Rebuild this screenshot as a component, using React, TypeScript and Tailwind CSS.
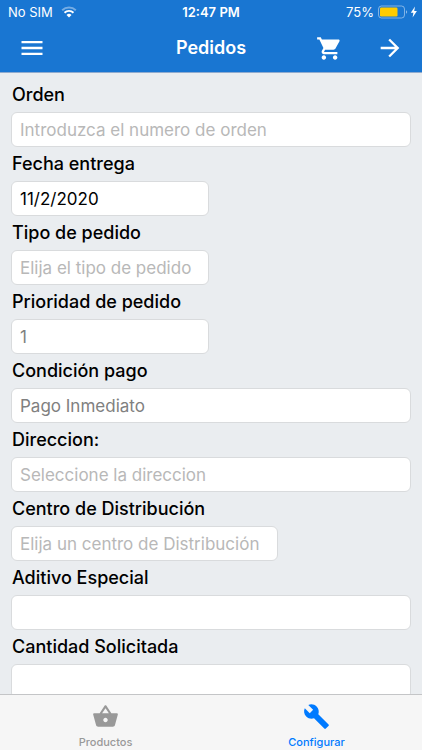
import { useState, type ReactNode } from "react";
import { MdArrowForward, MdMenu } from "react-icons/md";
import clsx from "clsx";

const fieldClass =
  "block h-[35px] rounded-md border border-[#d9dbdd] bg-white px-2 text-[17px] leading-6 outline-none appearance-none placeholder:text-[#b8b8b8]";

const icons = {
  cart: "M7 18c-1.1 0-1.99.9-1.99 2S5.9 22 7 22s2-.9 2-2-.9-2-2-2zM1 2v2h2l3.6 7.59-1.35 2.45c-.16.28-.25.61-.25.96 0 1.1.9 2 2 2h12v-2H7.42c-.14 0-.25-.11-.25-.25l.03-.12.9-1.63h7.45c.75 0 1.41-.41 1.75-1.03l3.58-6.49c.08-.14.12-.31.12-.48 0-.55-.45-1-1-1H5.21l-.94-2H1zm16 16c-1.1 0-1.99.9-1.99 2s.89 2 1.99 2 2-.9 2-2-.9-2-2-2z",
  basket:
    "M17.21 9l-4.38-6.56c-.19-.28-.51-.42-.83-.42-.32 0-.64.14-.83.43L6.79 9H2c-.55 0-1 .45-1 1 0 .09.01.18.04.27l2.54 9.27c.23.84 1 1.46 1.92 1.46h13c.92 0 1.69-.62 1.93-1.46l2.54-9.27L23 10c0-.55-.45-1-1-1h-4.79zM9 9l3-4.4L15 9H9zm3 8c-1.1 0-2-.9-2-2s.9-2 2-2 2 .9 2 2-.9 2-2 2z",
  wrench:
    "M22.7 19l-9.1-9.1c.9-2.3.4-5-1.5-6.9-2-2-5-2.4-7.4-1.3L9 6 6 9 1.6 4.7C.4 7.1.9 10.1 2.9 12.1c1.9 1.9 4.6 2.4 6.9 1.5l9.1 9.1c.4.4 1 .4 1.4 0l2.3-2.3c.5-.4.5-1.1.1-1.4z",
};

function Icon({ name }: { name: keyof typeof icons }) {
  return (
    <svg viewBox="0 0 24 24" className="size-[27px]" fill="currentColor" aria-hidden="true">
      <path d={icons[name]} />
    </svg>
  );
}

interface FieldProps {
  id: string;
  label: string;
  children: ReactNode;
}

function Field({ id, label, children }: FieldProps) {
  return (
    <div>
      <label htmlFor={id} className="block h-[34px] pl-px text-[18px] font-medium leading-[34px] text-black">
        {label}
      </label>
      {children}
    </div>
  );
}

interface PickerProps {
  id: string;
  options: string[];
  placeholder?: string;
  className?: string;
}

function Picker({ id, options, placeholder, className }: PickerProps) {
  const [value, setValue] = useState(placeholder ? "" : options[0]);

  return (
    <select
      id={id}
      value={value}
      onChange={(e) => setValue(e.target.value)}
      className={clsx(fieldClass, value ? "text-[#808080]" : "text-[#b8b8b8]", className)}
    >
      {placeholder && <option value="">{placeholder}</option>}
      {options.map((option) => (
        <option key={option} value={option}>
          {option}
        </option>
      ))}
    </select>
  );
}

function StatusBar() {
  return (
    <div className="grid h-6 grid-cols-3 items-center px-2 text-[13px] leading-4">
      <div className="flex items-center gap-2 whitespace-nowrap">
        <span>No SIM</span>
        <svg viewBox="0 0 16 12" className="h-3 w-4" fill="none">
          <path d="M1.2 4.2a9.8 9.8 0 0 1 13.6 0" stroke="#fff" strokeOpacity="0.4" strokeWidth="1.9" />
          <path d="M3.5 6.7a6.4 6.4 0 0 1 9 0" stroke="#fff" strokeWidth="1.9" />
          <path d="M8 11.4 5.5 8.9a3.6 3.6 0 0 1 5 0z" fill="#fff" />
        </svg>
      </div>
      <span className="text-center font-semibold">12:47 PM</span>
      <div className="-mr-1 flex items-center justify-end gap-1">
        <span>75%</span>
        <svg viewBox="0 0 40 14" className="h-[14px] w-10" fill="none">
          <rect x="0.5" y="1" width="26" height="12" rx="3" stroke="#fff" strokeOpacity="0.45" />
          <rect x="2" y="2.5" width="17.5" height="9" rx="1.2" fill="#fc0" />
          <path d="M28 5.2c1.6.6 1.6 3 0 3.6z" fill="#fff" fillOpacity="0.5" />
          <path d="M37 1.6 32.8 7.8h2.6l-.8 4.6 4.3-6.4h-2.7z" fill="#fff" />
        </svg>
      </div>
    </div>
  );
}

export default function App() {
  const [tab, setTab] = useState("configurar");

  const tabs = [
    { key: "productos", label: "Productos", icon: "basket" },
    { key: "configurar", label: "Configurar", icon: "wrench" },
  ] as const;

  return (
    <div className="flex h-screen flex-col bg-[#eaedf0] font-['Inter',sans-serif]">
      <header className="shrink-0 border-b border-[#8fabcf] bg-[#1976d2] text-white">
        <StatusBar />
        <div className="grid h-12 grid-cols-3 items-center px-[18px]">
          <button type="button" aria-label="Menu" className="justify-self-start">
            <MdMenu size={28} />
          </button>
          <h1 className="text-center text-[18px] font-semibold leading-6">Pedidos</h1>
          <div className="flex items-center justify-end gap-[33px]">
            <button type="button" aria-label="Carrito">
              <Icon name="cart" />
            </button>
            <button type="button" aria-label="Siguiente">
              <MdArrowForward size={28} />
            </button>
          </div>
        </div>
      </header>

      <main className="min-h-0 flex-1 overflow-y-auto px-[11px] pt-[5px] [scrollbar-width:none]">
        <Field id="orden" label="Orden">
          <input id="orden" className={clsx(fieldClass, "w-full")} placeholder="Introduzca el numero de orden" />
        </Field>
        <Field id="fecha" label="Fecha entrega">
          <input id="fecha" className={clsx(fieldClass, "w-[198px] text-black")} defaultValue="11/2/2020" />
        </Field>
        <Field id="tipo" label="Tipo de pedido">
          <Picker id="tipo" placeholder="Elija el tipo de pedido" options={["Entrega", "Recogida"]} className="w-[198px]" />
        </Field>
        <Field id="prioridad" label="Prioridad de pedido">
          <Picker id="prioridad" options={["1", "2", "3"]} className="w-[198px]" />
        </Field>
        <Field id="pago" label="Condición pago">
          <input id="pago" className={clsx(fieldClass, "w-full text-[#808080]")} value="Pago Inmediato" readOnly />
        </Field>
        <Field id="direccion" label="Direccion:">
          <input id="direccion" className={clsx(fieldClass, "w-full")} placeholder="Seleccione la direccion" />
        </Field>
        <Field id="centro" label="Centro de Distribución">
          <Picker id="centro" placeholder="Elija un centro de Distribución" options={["Centro 1"]} className="w-[267px]" />
        </Field>
        <Field id="aditivo" label="Aditivo Especial">
          <input id="aditivo" className={clsx(fieldClass, "w-full")} />
        </Field>
        <Field id="cantidad" label="Cantidad Solicitada">
          <input id="cantidad" className={clsx(fieldClass, "w-full")} />
        </Field>
      </main>

      <nav className="grid h-14 shrink-0 grid-cols-2 border-t border-[#c4c5c7] bg-[#f6f6f6]">
        {tabs.map(({ key, label, icon }) => (
          <button
            key={key}
            type="button"
            onClick={() => setTab(key)}
            className={clsx(
              "flex flex-col items-center gap-1 pt-2 text-[11px] font-medium leading-4",
              tab === key ? "text-[#007aff]" : "text-[#999]"
            )}
          >
            <Icon name={icon} />
            {label}
          </button>
        ))}
      </nav>
    </div>
  );
}
